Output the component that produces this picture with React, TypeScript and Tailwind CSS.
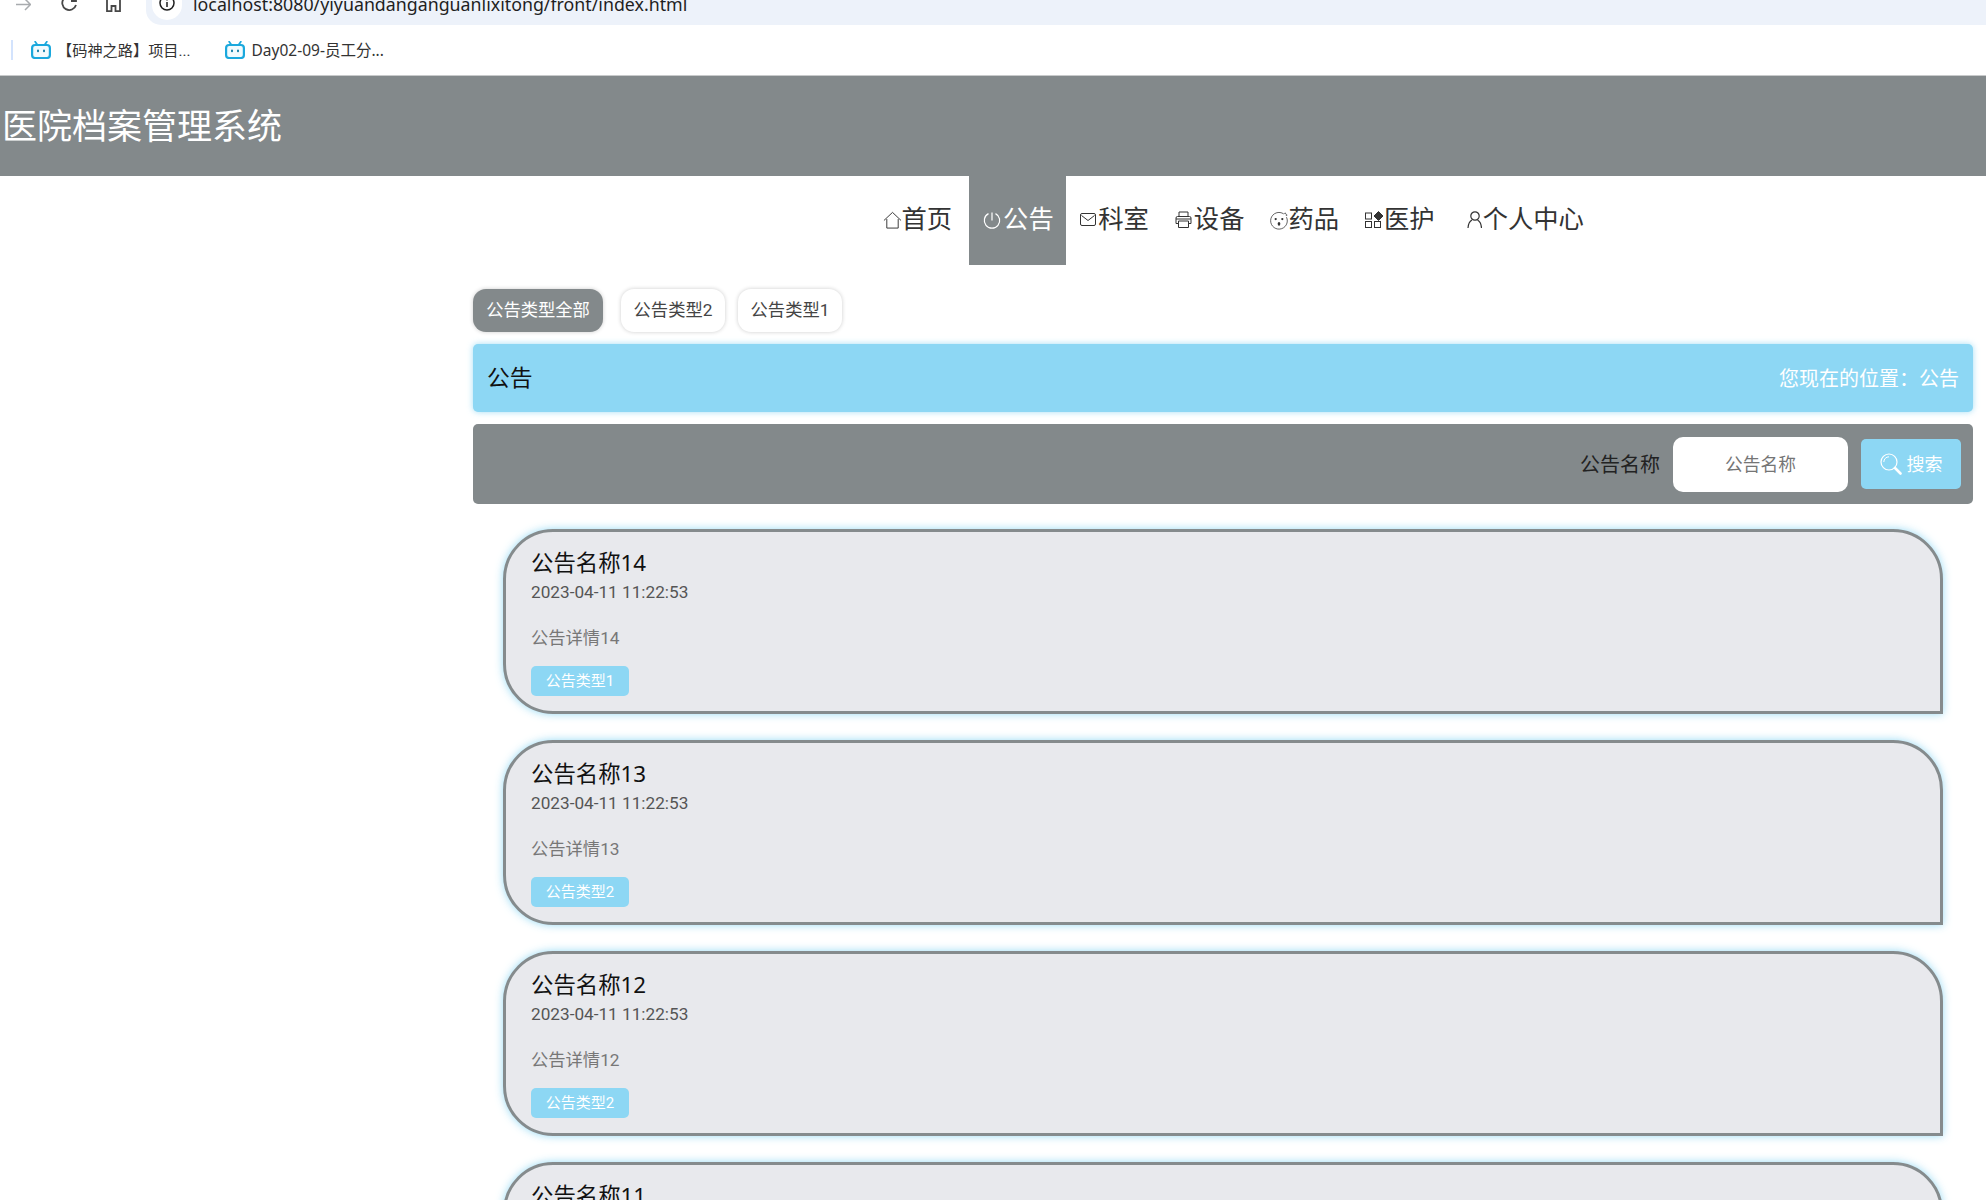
import React from "react";

const Bili = () => (
  <svg viewBox="0 0 20 18" className="h-[18px] w-[20px]" fill="none">
    <path d="M6.5 4 4.2 0.8M13.5 4l2.3-3.2" stroke="#1aa8dd" strokeWidth="1.8" strokeLinecap="round" />
    <rect x="1.1" y="4" width="17.8" height="13" rx="3" stroke="#1aa8dd" strokeWidth="2.2" fill="#f2fbfe" />
    <rect x="6" y="8.6" width="2" height="2.6" rx="1" fill="#1a7fa8" />
    <rect x="12" y="8.6" width="2" height="2.6" rx="1" fill="#1a7fa8" />
  </svg>
);

const stroke = { fill: "none", stroke: "currentColor", strokeWidth: 1 } as const;

const HomeIcon = () => (
  <svg viewBox="0 0 20 18" className="h-[18px] w-[20px]" {...stroke}>
    <path d="M1 9.500 10 1l9 8.500M4 8v9.500h12V8" />
  </svg>
);
const PowerIcon = () => (
  <svg viewBox="0 0 18 18" className="h-[18px] w-[18px]" {...stroke}>
    <path d="M5.500 2.600a7.700 7.700 0 1 0 7 0M9 1.500v8" strokeWidth="1.2" />
  </svg>
);
const MailIcon = () => (
  <svg viewBox="0 0 16 13" className="h-[13px] w-[16px]" {...stroke}>
    <rect x="0.5" y="0.5" width="15" height="12" rx="1.5" />
    <path d="m1.500 2.500 6.500 5 6.500-5" />
  </svg>
);
const PrintIcon = () => (
  <svg viewBox="0 0 17 17" className="h-[17px] w-[17px]" {...stroke}>
    <path d="M4 5.500V1h9v4.500M3.500 12.500H1V7a1.500 1.500 0 0 1 1.500-1.500h12A1.500 1.500 0 0 1 16 7v5.500h-2.500" />
    <path d="M3.500 10h10v6.500h-10zM1 8h15" />
  </svg>
);
const FaceIcon = () => (
  <svg viewBox="0 0 19 20" className="h-[20px] w-[19px]" {...stroke} strokeWidth="0.8">
    <path d="M14.500 3.600A8.800 8.800 0 1 0 17.400 7" />
    <circle cx="16" cy="3" r="0.5" />
    <circle cx="17.5" cy="4.8" r="0.5" />
    <circle cx="6" cy="9" r="1.2" fill="currentColor" stroke="none" />
    <circle cx="13" cy="9" r="1.2" fill="currentColor" stroke="none" />
    <ellipse cx="9.5" cy="14" rx="1.4" ry="2" fill="currentColor" stroke="none" />
  </svg>
);
const GridIcon = () => (
  <svg viewBox="0 0 19 17" className="h-[17px] w-[19px]" {...stroke}>
    <rect x="0.5" y="2" width="6" height="6" />
    <rect x="0.5" y="10.5" width="6" height="6" />
    <rect x="9.5" y="10.5" width="6" height="6" />
    <path d="m13.500 0.500 4.500 4.500-4.500 4.500L9 5z" fill="currentColor" />
  </svg>
);
const UserIcon = () => (
  <svg viewBox="0 0 15 17" className="h-[17px] w-[15px]" {...stroke} strokeWidth="1.2">
    <circle cx="8" cy="5" r="4.2" />
    <path d="M1 17c.2-3.800 1.800-6.800 4-8M14.500 17c-.2-3.800-1.800-6.800-4-8" />
  </svg>
);
const SearchIcon = () => (
  <svg viewBox="0 0 22 22" className="h-[22px] w-[22px]" fill="none" stroke="currentColor">
    <circle cx="9" cy="9" r="8" strokeWidth="1.2" />
    <path d="M3.800 9A5.200 5.200 0 0 1 9 3.800" strokeWidth="1" />
    <path d="m15 15 5.500 5.500" strokeWidth="2.600" strokeLinecap="round" />
  </svg>
);

const nav = [
  { label: "首页", icon: <HomeIcon />, slot: "w-[19px] shrink-0 overflow-visible", pr: "pr-[17px]", active: false },
  { label: "公告", icon: <PowerIcon />, slot: "w-[20px]", pr: "pr-[12px]", active: true },
  { label: "科室", icon: <MailIcon />, slot: "w-[18.5px]", pr: "pr-[12px]", active: false },
  { label: "设备", icon: <PrintIcon />, slot: "w-[19px]", pr: "pr-[12px]", active: false },
  { label: "药品", icon: <FaceIcon />, slot: "w-[18px]", pr: "pr-[12px]", active: false },
  { label: "医护", icon: <GridIcon />, slot: "w-[19px]", pr: "pr-[14px]", active: false },
  { label: "个人中心", icon: <UserIcon />, slot: "w-[20px] justify-end pr-[1px]", pr: "pr-[12px]", active: false },
];

const cards = [
  { name: "公告名称14", detail: "公告详情14", type: "公告类型1" },
  { name: "公告名称13", detail: "公告详情13", type: "公告类型2" },
  { name: "公告名称12", detail: "公告详情12", type: "公告类型2" },
  { name: "公告名称11", detail: "公告详情11", type: "公告类型1" },
];

export default function App() {
  return (
    <div className="h-[1200px] w-full overflow-hidden bg-white font-['Roboto','Noto_Sans_CJK_SC',sans-serif] text-[#333]">
      {/* Browser address row */}
      <div className="flex h-[25px] items-start overflow-hidden">
        <svg viewBox="0 0 15 12" className="ml-[16px] h-[12px] w-[15px]" fill="none" stroke="#a8abae" strokeWidth="1.5">
          <path d="M0 4.500h14M9 -1l5.500 5.500L9 10" />
        </svg>
        <svg viewBox="0 0 16 11" className="ml-[30px] h-[11px] w-[16px] overflow-hidden" fill="none" stroke="#474747" strokeWidth="1.8">
          <path d="M15 5a7 7 0 1 1-1-6M15 -4v5h-5" />
        </svg>
        <svg viewBox="0 0 15 12" className="ml-[29px] h-[12px] w-[15px]" fill="none" stroke="#474747" strokeWidth="1.8">
          <path d="M1 12V0M14 12V0M5.500 12V6h4v6M1 11.100h4.500M9.500 11.100H14" />
        </svg>
        <div className="ml-[25px] flex h-[25px] flex-1 rounded-bl-[15px] bg-[#edf2fa]">
          <div className="ml-[6px] flex h-[20px] w-[30px] items-start justify-center rounded-b-full bg-white">
            <svg viewBox="0 0 16 11" className="h-[11px] w-[16px]" fill="none" stroke="#1f1f1f" strokeWidth="1.5">
              <circle cx="8" cy="3" r="7" />
              <path d="M8 2v5M8 -1v1.600" />
            </svg>
          </div>
          <span className="ml-[11px] mt-[-9px] whitespace-nowrap font-['Noto_Sans','Noto_Sans_CJK_SC',sans-serif] text-[17.8px] leading-[26px] text-[#1f1f1f]">localhost:8080/yiyuandanganguanlixitong/front/index.html</span>
        </div>
      </div>

      {/* Bookmarks */}
      <div className="flex h-[51px] items-center border-b border-[#c8cacb]">
        <div className="ml-[11px] h-[20px] w-[2px] bg-[#d3e3fd]" />
        <div className="ml-[18px] flex items-center">
          <Bili />
          <span className="ml-[6px] pt-[2px] text-[15.2px] text-[#333]">【码神之路】项目...</span>
        </div>
        <div className="ml-[34px] flex items-center">
          <Bili />
          <span className="ml-[7px] pt-[2px] font-['Noto_Sans','Noto_Sans_CJK_SC',sans-serif] text-[15.5px] text-[#333]">Day02-09-员工分...</span>
        </div>
      </div>

      {/* Header */}
      <div className="flex h-[100px] items-center bg-[#83898b] pl-[2px] pt-[2px]">
        <h1 className="text-[35px] font-normal leading-none text-white">医院档案管理系统</h1>
      </div>

      {/* Nav */}
      <nav className="flex h-[89px] pl-[868.5px]">
        {nav.map((item) => (
          <div
            key={item.label}
            className={`flex items-center pb-[2px] pl-[14px] text-[25.3px] ${item.pr} ${item.active ? "bg-[#83898b] text-white" : "text-[#333]"}`}
          >
            <span className={`flex ${item.slot}`}>{item.icon}</span>
            <span>{item.label}</span>
          </div>
        ))}
      </nav>

      <main className="ml-[473px] w-[1500px]">
        {/* Type filters */}
        <div className="mt-[24px] flex h-[43px]">
          <div className="flex w-[130px] items-center justify-center rounded-[13px] bg-[#83898b] pt-[1px] text-[17.3px] text-white shadow-[0_0_4px_rgba(0,0,0,0.2)]">公告类型全部</div>
          <div className="ml-[18px] flex w-[104px] items-center justify-center rounded-[13px] bg-white pt-[1px] text-[17.3px] text-[#444] shadow-[0_0_4px_rgba(0,0,0,0.2)]">公告类型2</div>
          <div className="ml-[13px] flex w-[104px] items-center justify-center rounded-[13px] bg-white pt-[1px] text-[17.3px] text-[#444] shadow-[0_0_4px_rgba(0,0,0,0.2)]">公告类型1</div>
        </div>

        {/* Location bar */}
        <div className="mt-[12px] flex h-[68px] items-center justify-between rounded-[5px] bg-[#8dd7f4] px-[14px] pt-[2px] shadow-[0_0_6px_rgba(141,215,244,0.8)]">
          <span className="text-[22.8px] text-[#111]">公告</span>
          <span className="text-[20px] text-white">您现在的位置：公告</span>
        </div>

        {/* Search bar */}
        <div className="mt-[12px] flex h-[80px] items-center justify-end rounded-[5px] bg-[#83898b] pr-[12px]">
          <span className="pt-[2px] text-[20px] text-[#222]">公告名称</span>
          <div className="ml-[13px] flex h-[55px] w-[175px] items-center justify-center rounded-[10px] bg-white pt-[2px] text-[17.7px] text-[#757575]">公告名称</div>
          <button className="ml-[13px] flex h-[50px] w-[100px] items-center justify-center gap-[5px] rounded-[5px] bg-[#8dd7f4] text-[18px] text-white">
            <SearchIcon />
            搜索
          </button>
        </div>

        {/* Cards */}
        <div className="mt-[25px] px-[30px]">
          {cards.map((c) => (
            <div
              key={c.name}
              className="mb-[26px] flex h-[185px] flex-col rounded-[50px] rounded-br-none border-[3px] border-[#858b8d] bg-[#e8e9ed] pl-[25px] pt-[16px] shadow-[0_0_8px_rgba(141,215,244,0.9)]"
            >
              <div className="font-['Noto_Sans','Noto_Sans_CJK_SC',sans-serif] text-[22.4px] leading-[30px] text-[#111]">{c.name}</div>
              <div className="text-[17.2px] leading-[28px] text-[#555]">2023-04-11 11:22:53</div>
              <div className="mt-[18px] text-[17.3px] leading-[28px] text-[#777]">{c.detail}</div>
              <div className="mt-[14px] flex h-[30px] w-[98px] items-center justify-center rounded-[5px] bg-[#8dd7f4] pt-[1px] text-[15px] text-white">{c.type}</div>
            </div>
          ))}
        </div>
      </main>
    </div>
  );
}
